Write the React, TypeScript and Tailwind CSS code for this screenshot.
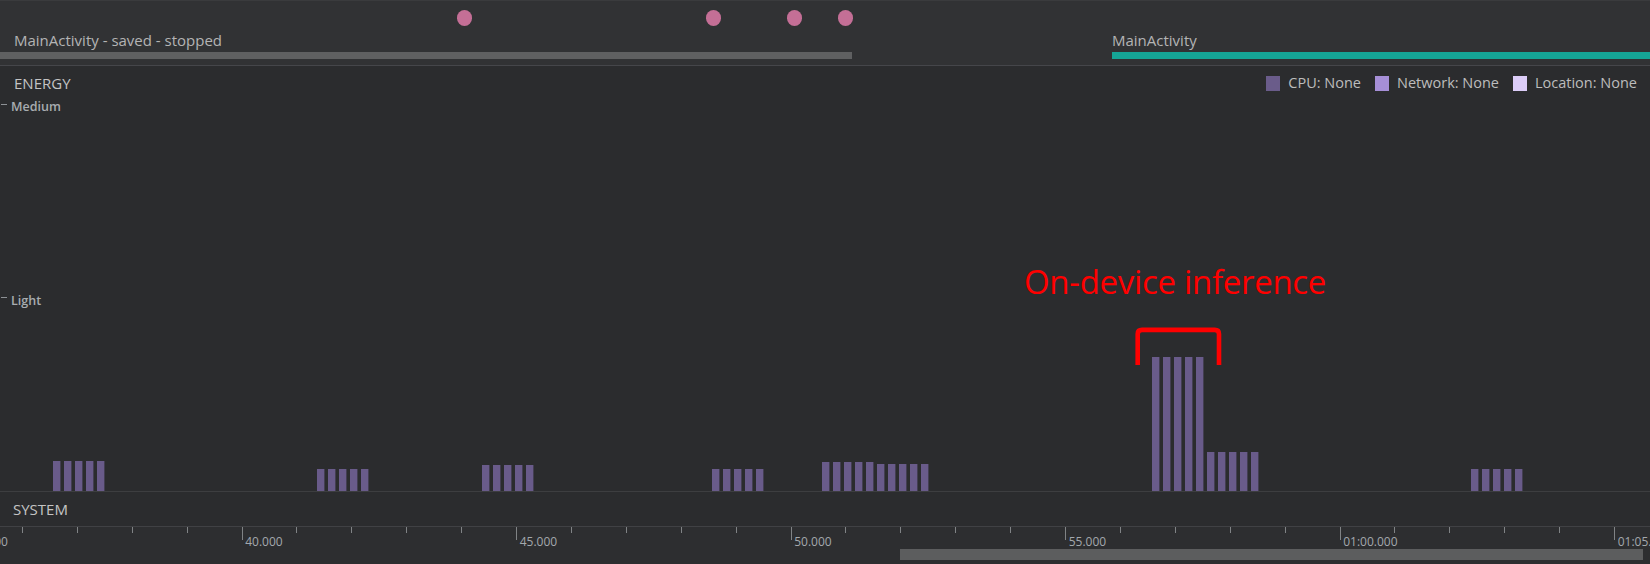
const Y0 = 66;
const PITCH = 11;

const clusters: { x: number; h: number[] }[] = [
  { x: 53, h: [30, 30, 30, 30, 30] },
  { x: 317, h: [22, 22, 22, 22, 22] },
  { x: 482, h: [26, 26, 26, 26, 26] },
  { x: 712, h: [22, 22, 22, 22, 22] },
  { x: 822, h: [29, 29, 29, 29, 29, 27, 27, 27, 27, 27] },
  { x: 1152, h: [134, 134, 134, 134, 134, 39, 39, 39, 39, 39] },
  { x: 1471, h: [22, 22, 22, 22, 22] },
];

const dots = [464, 713, 794, 845];

const majors = [
  { x: -33, label: "35.000" },
  { x: 241.7, label: "40.000" },
  { x: 516.2, label: "45.000" },
  { x: 790.7, label: "50.000" },
  { x: 1065.2, label: "55.000" },
  { x: 1339.7, label: "01:00.000" },
  { x: 1614.2, label: "01:05.000" },
];

function Legend({ color, label }: { color: string; label: string }) {
  return (
    <div className="flex items-center gap-[8px]">
      <span className={`w-[14px] h-[15px] ${color}`} />
      <span>{label}</span>
    </div>
  );
}

export default function App() {
  const ticks = Array.from({ length: 32 }).map((_, i) => -33 + i * 54.9);
  return (
    <div className="w-[1650px] h-[564px] overflow-hidden flex flex-col bg-[#2b2c2e] font-['Open_Sans',sans-serif] text-[#b9b9b9]">
      <div className="h-px bg-[#3a3b3d]" />

      {/* activity lane */}
      <div className="relative h-[64px] bg-[#313234] flex items-end pb-[6px]">
        {dots.map((x) => (
          <span
            key={x}
            className="absolute top-[9px] w-[15px] h-[16px] rounded-full bg-[#c46f96]"
            style={{ left: x - 7.5 }}
          />
        ))}
        <div className="w-[852px] flex flex-col">
          <span className="pl-[14px] text-[15px] leading-[18px] mb-[3px] text-[#b4b4b4]">
            MainActivity - saved - stopped
          </span>
          <div className="h-[7px] bg-[#5f6061]" />
        </div>
        <div className="ml-[260px] flex-1 flex flex-col">
          <span className="text-[15px] leading-[18px] mb-[3px] text-[#b4b4b4]">MainActivity</span>
          <div className="h-[7px] bg-[#15a596]" />
        </div>
      </div>
      <div className="h-px bg-[#45464a]" />

      {/* energy */}
      <div className="relative h-[425px] bg-[#2b2c2e]">
        <svg className="absolute inset-0" width={1650} height={425}>
          {clusters.map((c) =>
            c.h.map((h, i) => (
              <rect
                key={`${c.x}-${i}`}
                x={c.x + i * PITCH}
                y={425 - h}
                width={7.4}
                height={h}
                fill="#695b8a"
              />
            ))
          )}
          <line x1={1} x2={7} y1={104.5 - Y0} y2={104.5 - Y0} stroke="#8d9195" strokeWidth={1} />
          <line x1={1} x2={7} y1={297.5 - Y0} y2={297.5 - Y0} stroke="#8d9195" strokeWidth={1} />
          <path
            d={`M1137.7 ${365 - Y0} V${334 - Y0} Q1137.7 ${329.9 - Y0} 1142 ${329.9 - Y0} H1214.7 Q1219 ${329.9 - Y0} 1219 ${334 - Y0} V${365 - Y0}`}
            fill="none"
            stroke="#ff0000"
            strokeWidth={4.6}
          />
        </svg>

        <div className="relative flex items-center justify-between pl-[14px] pr-[13px] pt-[7px] text-[15px] leading-[20px]">
          <span className="text-[#c4c4c4]">ENERGY</span>
          <div className="flex items-center gap-[14px] text-[14.5px] text-[#bdbdbd]">
            <Legend color="bg-[#6a5c8a]" label="CPU: None" />
            <Legend color="bg-[#a68fd7]" label="Network: None" />
            <Legend color="bg-[#dccdf8]" label="Location: None" />
          </div>
        </div>

        <span className="absolute left-[11px] top-[33px] text-[12.5px] leading-[16px] font-semibold text-[#a8acb0]">
          Medium
        </span>
        <span className="absolute left-[11px] top-[227px] text-[12.5px] leading-[16px] font-semibold text-[#a8acb0]">
          Light
        </span>
        <span className="absolute left-[1024px] top-[199px] text-[33px] leading-[33px] tracking-[-0.3px] text-[#ff0000] whitespace-nowrap">
          On-device inference
        </span>
      </div>
      <div className="h-px bg-[#3d3e40]" />

      {/* system */}
      <div className="h-[34px] flex items-center pl-[13px] text-[15px] text-[#c4c4c4] bg-[#2b2c2e]">
        SYSTEM
      </div>
      <div className="h-px bg-[#404144]" />

      {/* time axis */}
      <div className="relative h-[21px] bg-[#2d2e30]">
        <svg className="absolute inset-0" width={1650} height={21}>
          {ticks.map((x, i) => (
            <line
              key={i}
              x1={Math.round(x) + 0.5}
              x2={Math.round(x) + 0.5}
              y1={0}
              y2={i % 5 === 0 ? 13 : 6}
              stroke="#808385"
              strokeWidth={1}
            />
          ))}
        </svg>
        {majors.map((m) => (
          <span
            key={m.label}
            className="absolute top-[7px] text-[12px] leading-[16px] text-[#a3a8ad] whitespace-nowrap"
            style={{ left: m.x + 3.5 }}
          >
            {m.label}
          </span>
        ))}
      </div>

      {/* scrollbar */}
      <div className="h-[12px] flex items-center bg-[#2d2e30]">
        <div className="ml-[900px] w-[743px] h-[11px] bg-[#5c5d5e]" />
      </div>
      <div className="flex-1 bg-[#2d2e30]" />
    </div>
  );
}
